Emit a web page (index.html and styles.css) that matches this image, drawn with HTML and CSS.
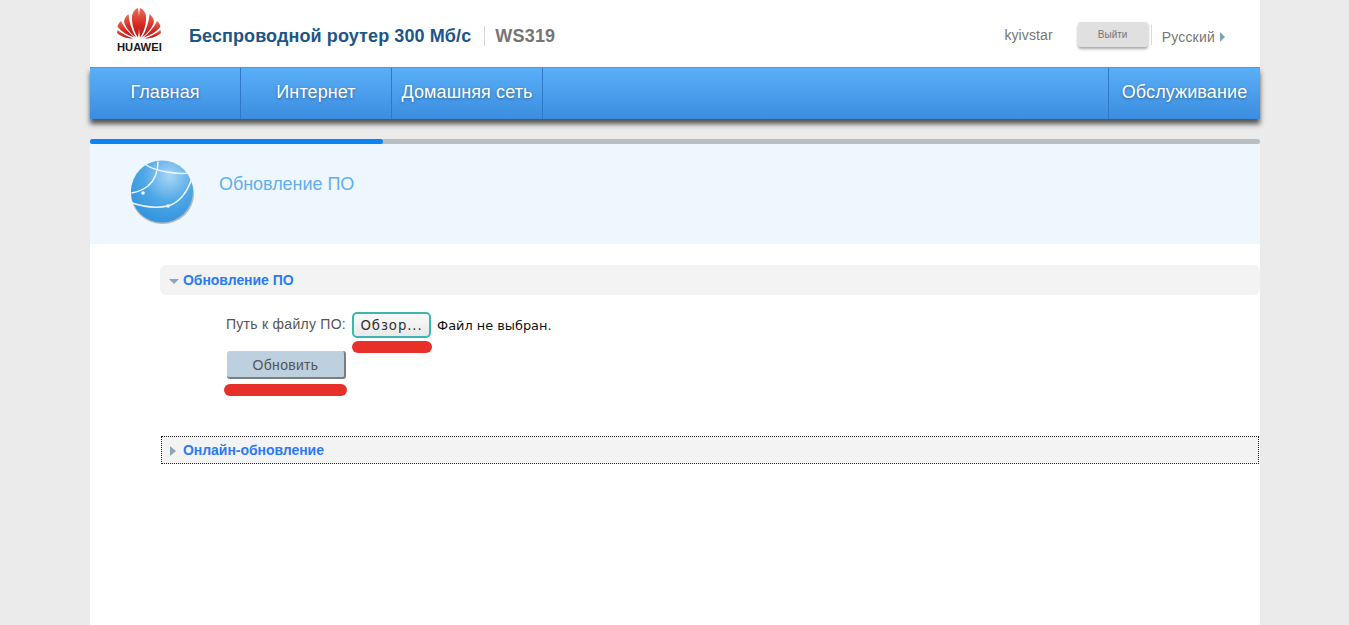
FILE: index.html
```html
<!DOCTYPE html>
<html lang="ru">
<head>
    <meta charset="UTF-8">
    <meta name="viewport" content="width=device-width, initial-scale=1.0">
    <title>Обновление ПО</title>
    <link rel="stylesheet" href="styles.css">
</head>
<body>
    <div class="page">
        <header class="top">
            <svg class="logo" viewBox="0 0 46 32" width="46" height="32">
                <defs>
                    <linearGradient id="petal" x1="0" y1="0" x2="0" y2="1">
                        <stop offset="0" stop-color="#e8705c"/>
                        <stop offset="0.55" stop-color="#d62a22"/>
                        <stop offset="1" stop-color="#b01a1c"/>
                    </linearGradient>
                </defs>
                <g fill="url(#petal)">
                    <path d="M22 30.5 C17.5 24 15.5 16 16 9 C16.5 5 19 2 22 1 C23.3 8 23.8 20 22 30.5Z"/>
                    <path d="M24 30.5 C28.5 24 30.5 16 30 9 C29.5 5 27 2 24 1 C22.7 8 22.2 20 24 30.5Z"/>
                    <path d="M20 30.5 C14 26 9.5 20.5 8 14.5 C8.5 11.5 10 8.5 12.5 7 C13 14 15.5 23 20 30.5Z"/>
                    <path d="M26 30.5 C32 26 36.5 20.5 38 14.5 C37.5 11.5 36 8.5 33.5 7 C33 14 30.5 23 26 30.5Z"/>
                    <path d="M18.5 30.5 C11 28 5 24.5 1.5 19.5 C2 17 3.5 15 5 14 C8 20 12.5 26 18.5 30.5Z"/>
                    <path d="M27.5 30.5 C35 28 41 24.5 44.5 19.5 C44 17 42.5 15 41 14 C38 20 33.5 26 27.5 30.5Z"/>
                    <path d="M17 31.5 C11 31.7 5 29.5 1 26 C1 25 1.2 24 1.6 23 C6 26.5 11 29.5 17 31.5Z"/>
                    <path d="M29 31.5 C35 31.7 41 29.5 45 26 C45 25 44.8 24 44.4 23 C40 26.5 35 29.5 29 31.5Z"/>
                </g>
            </svg>
            <span class="logo-text">HUAWEI</span>
            <h1 class="product">Беспроводной роутер 300 Мб/с</h1>
            <span class="model">WS319</span>
            <div class="user-box">
                <span class="user-name">kyivstar</span>
                <button class="logout">Выйти</button>
                <span class="lang">Русский<i class="lang-arrow"></i></span>
            </div>
        </header>

        <nav class="menu">
            <a class="menu-item">Главная</a>
            <a class="menu-item">Интернет</a>
            <a class="menu-item">Домашняя сеть</a>
            <span class="menu-fill"></span>
            <a class="menu-item menu-last">Обслуживание</a>
        </nav>

        <div class="steps">
            <div class="progress"><div class="progress-done"></div></div>
        </div>

        <section class="banner">
            <svg class="globe" viewBox="0 0 66 66" width="66" height="66">
                <defs>
                    <radialGradient id="ball" cx="0.62" cy="0.25" r="0.85">
                        <stop offset="0" stop-color="#a8d6f6"/>
                        <stop offset="0.5" stop-color="#4ea6e6"/>
                        <stop offset="1" stop-color="#2a90dc"/>
                    </radialGradient>
                </defs>
                <ellipse cx="32.5" cy="34" rx="31.5" ry="30" fill="#8f8f8f" opacity="0.6"/>
                <circle cx="32" cy="31.5" r="31" fill="url(#ball)"/>
                <g fill="none" stroke="#eef6fc" stroke-width="1.5">
                    <path d="M28 1.5 C28 12 25 20 18 26 C13 30 7 32 1.5 33"/>
                    <path d="M2 43 C14 47 28 48 38 46 C48 43 57 33 62 18"/>
                    <path d="M13 3 C20 8 30 11 37 12 C45 13.5 52 14 58 13"/>
                </g>
                <circle cx="13" cy="33" r="1.8" fill="#eef6fc"/>
                <circle cx="38" cy="46" r="1.8" fill="#eef6fc"/>
            </svg>
            <h2 class="banner-title">Обновление ПО</h2>
        </section>

        <main class="content">
            <div class="panel-head">
                <i class="arrow-down"></i>Обновление ПО
            </div>
            <div class="panel-body">
                <div class="file-row">
                    <label class="file-label">Путь к файлу ПО:</label>
                    <button class="browse">Обзор...</button>
                    <span class="file-name">Файл не выбран.</span>
                    <span class="mark mark-browse"></span>
                </div>
                <div class="update-row">
                    <button class="update">Обновить</button>
                    <span class="mark mark-update"></span>
                </div>
            </div>
            <div class="panel-head panel-focus">
                <i class="arrow-right"></i>Онлайн-обновление
            </div>
        </main>
    </div>
</body>
</html>
```

FILE: styles.css
```css
html, body {
    margin: 0;
    padding: 0;
    height: 100%;
    overflow: hidden;
}

body {
    font-family: "Liberation Sans", Arial, sans-serif;
    background-color: #ebebeb;
}

.page {
    width: 1170px;
    height: 625px;
    margin-left: 90px;
    background-color: #fff;
}

/* top bar */
.top {
    position: relative;
    display: flex;
    align-items: center;
    height: 67px;
    background-color: #fff;
}

.logo {
    position: absolute;
    left: 26px;
    top: 7px;
}

.logo-text {
    position: absolute;
    left: 27px;
    top: 41px;
    font-size: 11.2px;
    line-height: 12px;
    font-weight: bold;
    color: #1a1a1a;
}

.product {
    margin: 5px 0 0 99px;
    font-size: 18px;
    font-weight: bold;
    letter-spacing: 0.1px;
    color: #1c5587;
}

.model {
    margin: 5px 0 0 13px;
    padding-left: 10px;
    border-left: 1px solid #d9d9d9;
    font-size: 18px;
    line-height: 20px;
    font-weight: bold;
    letter-spacing: 0.2px;
    color: #767676;
}

.user-box {
    display: flex;
    align-items: center;
    margin-left: auto;
    padding-right: 35px;
    color: #767676;
    font-size: 14px;
}

.user-name {
    margin-right: 25px;
    margin-top: 2px;
    letter-spacing: 0.1px;
}

.logout {
    width: 70px;
    height: 25px;
    margin-top: 2px;
    padding: 0;
    border: none;
    border-radius: 3px;
    background-color: #e0e0e0;
    box-shadow: 0 2px 3px rgba(0, 0, 0, 0.35);
    color: #767676;
    font-family: inherit;
    font-size: 10px;
}

.lang {
    display: flex;
    align-items: flex-start;
    height: 20px;
    margin-left: 3px;
    margin-top: 3px;
    padding-left: 10px;
    border-left: 1px solid #d9d9d9;
    line-height: 24px;
    letter-spacing: 0.2px;
}

.lang-arrow {
    width: 0;
    height: 0;
    margin-left: 5px;
    margin-top: 7px;
    border-left: 5px solid #7da3b5;
    border-top: 5px solid transparent;
    border-bottom: 5px solid transparent;
}

/* main menu */
.menu {
    position: relative;
    z-index: 1;
    display: flex;
    height: 52px;
    box-sizing: border-box;
    border-top: 1px solid #5b94cf;
    background: linear-gradient(#5aaff7, #3b8de0);
    box-shadow: 0 5px 5px rgba(0, 0, 0, 0.65);
}

.menu-item {
    width: 150px;
    border-right: 1px solid #2f77c9;
    color: #fff;
    font-size: 18px;
    letter-spacing: 0.1px;
    line-height: 48px;
    text-align: center;
    text-shadow: 0 1px 3px rgba(0, 0, 0, 0.35);
}

.menu-fill {
    flex: 1;
}

.menu-last {
    width: 151px;
    border-right: none;
    border-left: 1px solid #2f77c9;
}

/* step progress */
.steps {
    padding-top: 20px;
    background-color: #ebebeb;
}

.progress {
    height: 5px;
    border-radius: 3px;
    background-color: #b9bec3;
}

.progress-done {
    width: 293px;
    height: 5px;
    border-radius: 3px;
    background-color: #0a84f4;
}

/* page banner */
.banner {
    display: flex;
    height: 100px;
    background-color: #eff7fe;
}

.globe {
    margin: 16px 0 0 40px;
}

.banner-title {
    margin: 30px 0 0 23px;
    font-size: 18px;
    line-height: 20px;
    font-weight: normal;
    letter-spacing: -0.05px;
    color: #62aef0;
}

/* content */
.content {
    padding: 21px 0 0 70px;
}

.panel-head {
    height: 30px;
    display: flex;
    align-items: center;
    border-radius: 6px;
    background-color: #f3f3f3;
    color: #2b7bf0;
    font-size: 14px;
    font-weight: bold;
    letter-spacing: -0.05px;
}

.arrow-down {
    width: 0;
    height: 0;
    margin: 2px 4px 0 9px;
    border-top: 5px solid #89a7ba;
    border-left: 5px solid transparent;
    border-right: 5px solid transparent;
}

.arrow-right {
    width: 0;
    height: 0;
    margin: 2px 7px 0 8px;
    border-left: 6px solid #89a7ba;
    border-top: 5px solid transparent;
    border-bottom: 5px solid transparent;
}

.panel-focus {
    height: 26px;
    margin: 0 1px;
    border: 1px dotted #222;
    border-radius: 0;
}

.panel-body {
    height: 141px;
    padding: 17px 0 0 66px;
    box-sizing: border-box;
}

.file-row {
    position: relative;
    display: flex;
    align-items: center;
    height: 26px;
}

.file-label {
    color: #555;
    font-size: 14px;
    letter-spacing: 0.27px;
    margin-top: -2px;
}

.browse {
    width: 79px;
    height: 26px;
    margin-left: 6px;
    padding: 0;
    border: 2px solid #3bb8ad;
    border-radius: 5px;
    background: linear-gradient(#fafafa, #e9e9e9);
    color: #333;
    font-family: "DejaVu Sans", sans-serif;
    font-size: 13.3px;
    letter-spacing: 0.9px;
}

.file-name {
    margin-left: 6px;
    color: #111;
    font-family: "DejaVu Sans", sans-serif;
    font-size: 12.9px;
}

.update-row {
    position: relative;
    margin-top: 13px;
}

.update {
    display: block;
    width: 119px;
    height: 28px;
    margin-left: 1px;
    padding: 1px 0 0;
    border: none;
    border-right: 2px solid #7d7d7d;
    border-bottom: 2px solid #7d7d7d;
    border-radius: 3px;
    background-color: #bcd0e0;
    color: #555;
    font-family: "Liberation Sans", Arial, sans-serif;
    font-size: 14px;
    letter-spacing: 0.3px;
}

/* red marks drawn over the screenshot */
.mark {
    position: absolute;
    height: 12px;
    border-radius: 6px;
    background-color: #e8302a;
}

.mark-browse {
    left: 126px;
    top: 29px;
    width: 80px;
}

.mark-update {
    left: -2px;
    top: 33px;
    width: 123px;
}
```
